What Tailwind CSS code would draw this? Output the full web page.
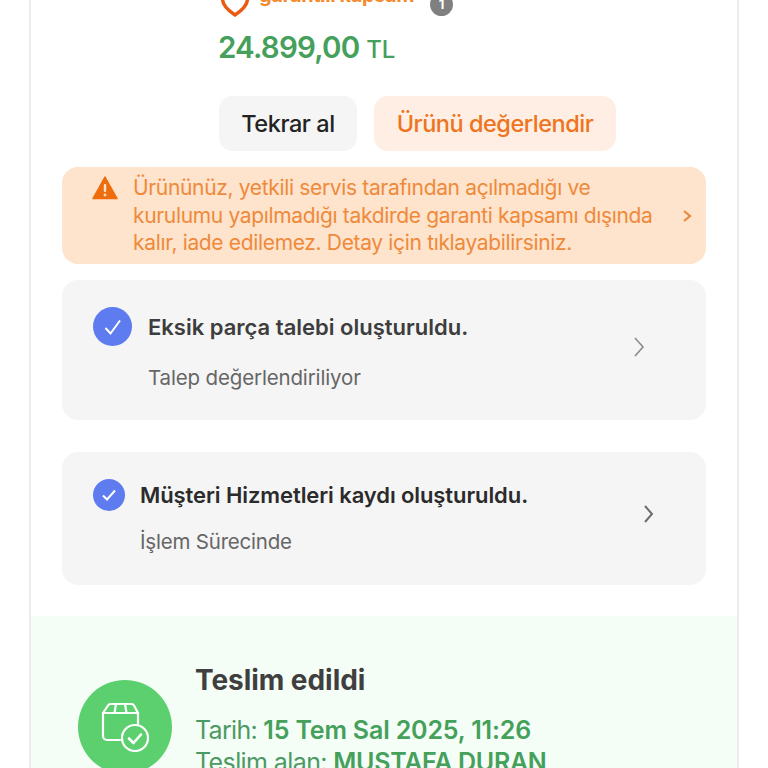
<!DOCTYPE html>
<html lang="en">
<head>
    <meta charset="UTF-8">
    <script src="https://cdn.jsdelivr.net/npm/@tailwindcss/browser@4"></script>
    <title>Sipariş Detayı</title>
</head>
<body class="h-[768px] overflow-hidden bg-white font-['Inter',sans-serif]">
    <div class="ml-[29px] w-[710px] h-[768px] overflow-hidden border-x-2 border-[#ececec]">
        <!-- product info, cut by the top of the screen -->
        <div class="pl-[188px] -mt-[16px]">
            <div class="flex h-[32px]">
                <svg class="ml-[1px]" width="30" height="33" viewBox="0 0 30 33" fill="none" stroke="#ea5b12" stroke-width="3.500" stroke-linejoin="round">
                    <path d="M2.500 2h25v13c0 6-5 11-12.500 16C7.500 26 2.500 21 2.500 15z"/>
                </svg>
                <span class="ml-[9px] -mt-[1px] h-[24px] text-[20px] leading-[24px] font-bold tracking-[-0.4px] text-[#f58a2e]">garantili kapsam</span>
                <span class="ml-[16px] mt-[9px] w-[23px] h-[23px] rounded-full bg-[#808080] text-white text-[13px] font-bold flex items-center justify-center">1</span>
            </div>
            <div class="mt-[11px] h-[40px] flex items-baseline text-[#44a05a] font-semibold">
                <span class="-ml-[1px] text-[29.500px] leading-[40px] tracking-[-0.8px]">24.899,00</span>
                <span class="ml-[7px] text-[24px] font-medium tracking-[-0.2px]">TL</span>
            </div>
            <div class="mt-[29px] flex gap-[17px]">
                <button class="w-[138px] h-[55px] rounded-[14px] bg-[#f5f5f5] text-[23.500px] font-medium tracking-[-0.45px] text-[#222]">Tekrar al</button>
                <button class="w-[242px] h-[55px] rounded-[14px] bg-[#feeee3] text-[23.500px] font-medium tracking-[-0.47px] text-[#ee7420]">Ürünü değerlendir</button>
            </div>
        </div>

        <div class="mx-[31px] mt-[16px] flex flex-col">
            <!-- warning -->
            <div class="h-[97px] rounded-[16px] bg-[#fee3cd] flex items-center pl-[30px] pr-[13px]">
                <svg class="shrink-0 self-start mt-[9px]" width="26" height="24" viewBox="0 0 26 24">
                    <path d="M13 1 25 22.500H1z" fill="#ee6c0c" stroke="#ee6c0c" stroke-width="1.500" stroke-linejoin="round"/>
                    <rect x="11.800" y="8" width="2.400" height="8" rx="1" fill="#fee3cd"/>
                    <circle cx="13" cy="19" r="1.400" fill="#fee3cd"/>
                </svg>
                <p class="ml-[15px] w-[530px] text-[21px] leading-[27.500px] tracking-[-0.34px] text-[#ee8a3a]">Ürününüz, yetkili servis tarafından açılmadığı ve<br>kurulumu yapılmadığı takdirde garanti kapsamı dışında<br>kalır, iade edilemez. Detay için tıklayabilirsiniz.</p>
                <svg class="ml-auto" width="12" height="14" viewBox="0 0 12 14" fill="none" stroke="#e8893c" stroke-width="2.200"><path d="M3 2l6 5-6 5"/></svg>
            </div>

            <!-- status cards -->
            <div class="mt-[16px] h-[140px] rounded-[16px] bg-[#f5f5f5] flex pl-[31px] pt-[27px]">
                <span class="w-[39px] h-[39px] rounded-full bg-[#5e7cf0] flex items-center justify-center">
                    <svg width="22" height="22" viewBox="0 0 22 22" fill="none" stroke="#fff" stroke-width="2"><path d="M3.500 12l5 5.500L18 4.500"/></svg>
                </span>
                <div class="ml-[16px]">
                    <p class="mt-[5px] text-[22px] leading-[30px] font-semibold text-[#3d3d3d]">Eksik parça talebi oluşturuldu.</p>
                    <p class="mt-[21px] text-[20.500px] leading-[30px] tracking-[-0.15px] text-[#666]">Talep değerlendiriliyor</p>
                </div>
                <svg class="ml-auto mr-[61px] mt-[29px]" width="12" height="22" viewBox="0 0 12 22" fill="none" stroke="#8a8a8a" stroke-width="1.600"><path d="M2 2l8 9-8 9"/></svg>
            </div>

            <div class="mt-[32px] h-[133px] rounded-[16px] bg-[#f5f5f5] flex pl-[31px] pt-[27px]">
                <span class="w-[32px] h-[32px] rounded-full bg-[#5e7cf0] flex items-center justify-center">
                    <svg width="18" height="18" viewBox="0 0 18 18" fill="none" stroke="#fff" stroke-width="2"><path d="M3 9.500l4 4L15 4.500"/></svg>
                </span>
                <div class="ml-[15px]">
                    <p class="text-[22px] leading-[32px] font-semibold tracking-[-0.09px] text-[#2b2b2b]">Müşteri Hizmetleri kaydı oluşturuldu.</p>
                    <p class="mt-[15px] text-[20.500px] leading-[32px] tracking-[-0.2px] text-[#666]">İşlem Sürecinde</p>
                </div>
                <svg class="ml-auto mr-[51px] mt-[25px]" width="13" height="20" viewBox="0 0 13 20" fill="none" stroke="#6e6e6e" stroke-width="2"><path d="M3 2l7 8-7 8"/></svg>
            </div>
        </div>

        <!-- delivery -->
        <div class="mt-[31px] h-[200px] bg-[#f5fdf7] flex pl-[47px] pt-[64px]">
            <span class="w-[94px] h-[94px] rounded-full bg-[#5cd06f] flex items-center justify-center shrink-0">
                <svg width="50" height="50" viewBox="0 0 50 50" fill="none" stroke="#fff" stroke-width="2.200" stroke-linecap="round" stroke-linejoin="round">
                    <path d="M20 38H7a4 4 0 0 1-4-4V11l5-7.500A3 3 0 0 1 10.500 2h21a3 3 0 0 1 2.500 1.500L38 11v11"/>
                    <path d="M3 11h35M16 2l-1.500 9M25 2l1.500 9"/>
                    <circle cx="35" cy="36" r="13"/>
                    <path d="M29 36.500l4.500 4.500 7.500-8.500" stroke-width="2.600"/>
                </svg>
            </span>
            <div class="ml-[23px] -mt-[16px]">
                <h2 class="text-[28px] leading-[32px] font-bold tracking-[-0.05px] text-[#3f3f3f]">Teslim edildi</h2>
                <p class="mt-[18px] text-[25px] leading-[32px] tracking-[-0.7px] text-[#4b9a63]">Tarih: <span class="font-semibold tracking-[-0.17px] text-[#44a05a]">15 Tem Sal 2025, 11:26</span></p>
                <p class="text-[25px] leading-[32px] tracking-[-0.6px] text-[#4b9a63]">Teslim alan: <span class="font-semibold tracking-[-0.3px] text-[#44a05a]">MUSTAFA DURAN</span></p>
            </div>
        </div>
    </div>
</body>
</html>
